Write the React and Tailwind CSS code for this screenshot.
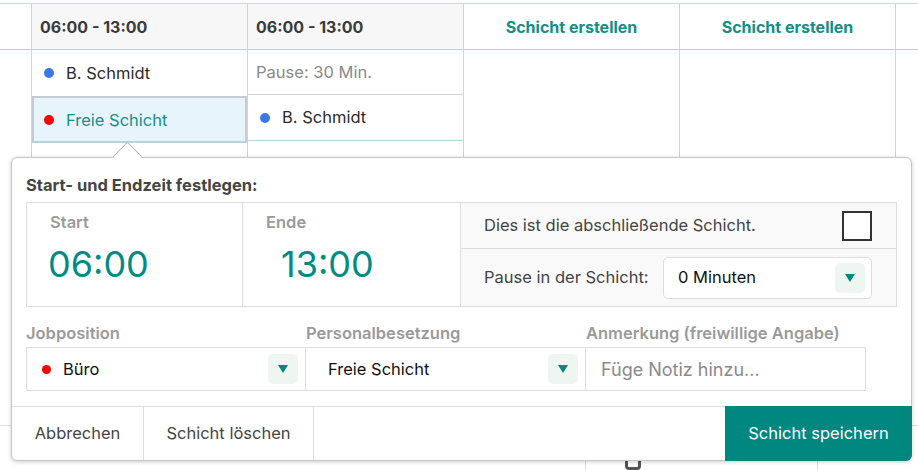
import React from "react";

const Tri = () => (
  <svg width="10" height="8" viewBox="0 0 10 8">
    <path d="M0 0 L10 0 L5 8 Z" fill="#00877f" />
  </svg>
);

const ArrowBtn = () => (
  <div className="w-[30px] h-[30px] rounded-[5px] bg-[#eff6f1] flex items-center justify-center">
    <Tri />
  </div>
);

export default function App() {
  return (
    <div className="relative w-[918px] h-[470px] overflow-hidden bg-white font-['Inter',sans-serif] text-[16.5px] text-[#3a3a3a]">
      {/* background calendar */}
      <div className="mt-[3px] flex h-[422px] border-t border-[#c9d9e2]">
        <div className="w-[32px] border-r border-[#d4d4d4] flex flex-col">
          <div className="h-[46px] border-b border-[#b9d2de]" />
        </div>
        <div className="w-[216px] border-r border-[#d4d4d4] flex flex-col">
          <div className="h-[46px] border-b border-[#b9d2de] bg-[#f7f7f7] flex items-center pl-[8px] font-bold text-[16px] text-[#3a3a3a]">
            06:00 - 13:00
          </div>
          <div className="h-[46px] flex items-center pl-[12px]">
            <span className="w-[10px] h-[10px] rounded-full bg-[#3b78e7] mr-[12px]" />
            <span className="text-[#2b2b2b]">B. Schmidt</span>
          </div>
          <div className="h-[47px] border-2 border-[#c4ccd1] border-b-[#b9d2de] bg-[#e7f4fc] flex items-center pl-[10px] pt-[1px]">
            <span className="w-[10px] h-[10px] rounded-full bg-[#ff0000] mr-[12px]" />
            <span className="text-[#168f88]">Freie Schicht</span>
          </div>
        </div>
        <div className="w-[216px] border-r border-[#d4d4d4] flex flex-col">
          <div className="h-[46px] border-b border-[#b9d2de] bg-[#f7f7f7] flex items-center pl-[8px] font-bold text-[16px] text-[#3a3a3a]">
            06:00 - 13:00
          </div>
          <div className="h-[45px] border-b border-[#d4d4d4] flex items-center pl-[8px] text-[#8a8a8a]">
            Pause: 30 Min.
          </div>
          <div className="h-[46px] border-b border-[#b9d2de] flex items-center pl-[12px]">
            <span className="w-[10px] h-[10px] rounded-full bg-[#3b78e7] mr-[12px]" />
            <span className="text-[#2b2b2b]">B. Schmidt</span>
          </div>
        </div>
        <div className="w-[216px] border-r border-[#d4d4d4] flex flex-col">
          <div className="h-[46px] border-b border-[#b9d2de] flex items-center justify-center font-bold text-[16px] text-[#138e88]">
            Schicht erstellen
          </div>
        </div>
        <div className="w-[216px] border-r border-[#d4d4d4] flex flex-col">
          <div className="h-[46px] border-b border-[#b9d2de] flex items-center justify-center font-bold text-[16px] text-[#138e88]">
            Schicht erstellen
          </div>
        </div>
        <div className="flex-1 flex flex-col">
          <div className="h-[46px] border-b border-[#b9d2de]" />
        </div>
      </div>
      <div className="flex h-[45px] border-t border-[#dcdcdc]">
        <div className="w-[586px] border-r border-[#dcdcdc]" />
        <div className="w-[232px] border-r border-[#dcdcdc] pl-[39px] pt-[28px]">
          <div className="w-[16px] h-[16px] rounded-[4px] border-[3px] border-[#555]" />
        </div>
        <div className="flex-1" />
      </div>

      {/* popover */}
      <div className="absolute left-[11px] top-[157px] w-[901px] h-[304px] border border-[#c6c6c6] rounded-[6px] bg-white shadow-[0_1px_4px_rgba(0,0,0,0.2)] flex flex-col">
        <div className="absolute left-[105px] top-[-12px] w-[21px] h-[21px] bg-white border-t border-l border-[#b5b5b5] rotate-45" />
        <div className="relative h-[44px] px-[14px] pt-[17px] leading-[20px] font-bold text-[#444]">
          Start- und Endzeit festlegen:
        </div>
        <div className="mx-[14px] h-[105px] border border-[#dddddd] flex">
          <div className="w-[216px] border-r border-[#dddddd] pl-[21px] pt-[9px]">
            <div className="pl-[2px] leading-[20px] font-semibold text-[#9a9a9a]">Start</div>
            <div className="mt-[10px] leading-[44px] text-[36px] text-[#008b84]">06:00</div>
          </div>
          <div className="w-[218px] border-r border-[#dddddd] pl-[23px] pt-[9px]">
            <div className="leading-[20px] font-semibold text-[#9a9a9a]">Ende</div>
            <div className="mt-[10px] pl-[15px] leading-[44px] text-[36px] text-[#008b84]">13:00</div>
          </div>
          <div className="flex-1 bg-[#f9f9f9] flex flex-col">
            <div className="h-[46px] border-b border-[#dddddd] flex items-center justify-between pl-[23px] pr-[24px]">
              <span className="text-[#444]">Dies ist die abschließende Schicht.</span>
              <span className="w-[30px] h-[30px] border-2 border-[#333] bg-white" />
            </div>
            <div className="flex-1 flex items-center justify-between pl-[23px] pr-[24px]">
              <span className="text-[#444]">Pause in der Schicht:</span>
              <div className="w-[209px] h-[42px] rounded-[5px] border border-[#dddddd] bg-white flex items-center justify-between pl-[14px] pr-[6px]">
                <span className="text-[#111]">0 Minuten</span>
                <ArrowBtn />
              </div>
            </div>
          </div>
        </div>
        <div className="h-[40px] px-[14px] pt-[16px] flex leading-[20px] font-semibold text-[#9a9a9a]">
          <div className="w-[280px]">Jobposition</div>
          <div className="w-[280px]">Personalbesetzung</div>
          <div className="w-[280px]">Anmerkung (freiwillige Angabe)</div>
        </div>
        <div className="ml-[14px] h-[44px] flex">
          <div className="w-[280px] border border-[#dddddd] flex items-center justify-between pl-[15px] pr-[7px]">
            <div className="flex items-center">
              <span className="w-[9px] h-[9px] rounded-full bg-[#ff0000] mr-[12px]" />
              <span className="text-[#111]">Büro</span>
            </div>
            <ArrowBtn />
          </div>
          <div className="w-[280px] border-y border-r border-[#dddddd] flex items-center justify-between pl-[22px] pr-[7px]">
            <span className="text-[#111]">Freie Schicht</span>
            <ArrowBtn />
          </div>
          <div className="w-[280px] border-y border-r border-[#dddddd] flex items-center pl-[15px]">
            <span className="text-[18px] text-[#8a8a8a]">Füge Notiz hinzu...</span>
          </div>
        </div>
        <div className="h-[15px]" />
        <div className="h-[54px] border-t border-[#dddddd] flex">
          <div className="w-[132px] border-r border-[#dddddd] flex items-center justify-center text-[#444]">
            Abbrechen
          </div>
          <div className="w-[170px] border-r border-[#dddddd] flex items-center justify-center text-[#444]">
            Schicht löschen
          </div>
          <div className="ml-auto -mt-px -mr-px -mb-px w-[187px] h-[55px] bg-[#00877f] rounded-br-[6px] flex items-center justify-center text-white">
            Schicht speichern
          </div>
        </div>
      </div>
    </div>
  );
}
